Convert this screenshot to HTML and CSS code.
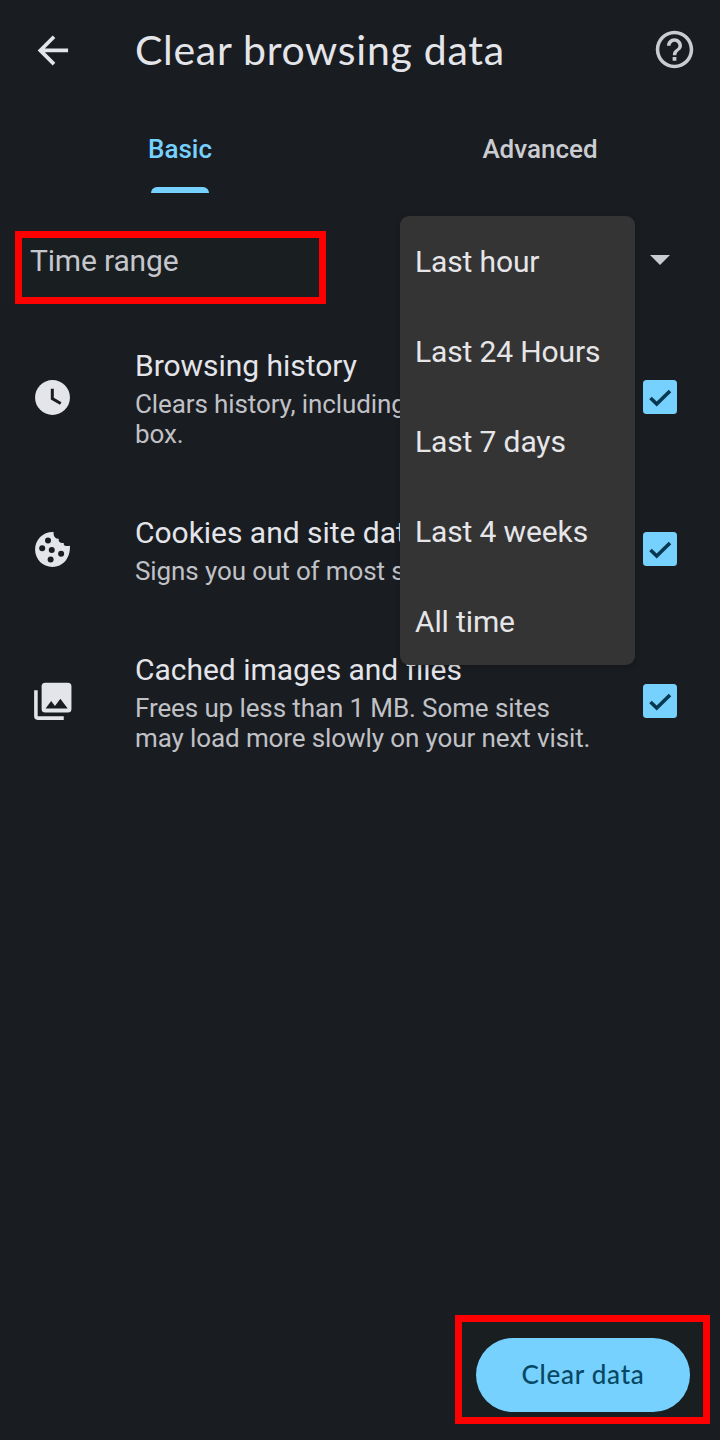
FILE: index.html
```html
<!DOCTYPE html>
<html lang="en">
<head>
<meta charset="utf-8">
<title>Clear browsing data</title>
<link rel="stylesheet" href="styles.css">
</head>
<body>
<div class="screen">
  <header class="bar">
    <svg class="icon" viewBox="0 0 24 24" fill="none" stroke="#e4e5ea" stroke-width="2"><path d="M20.300 12.500H5.600M12.800 5.200l-7.300 7.300 7.300 7.300"/></svg>
    <h1 class="title">Clear browsing data</h1>
    <svg class="icon help" viewBox="0 0 24 24" fill="#cbccd1"><path d="M11 18h2v-2h-2v2zm1-16C6.480 2 2 6.480 2 12s4.480 10 10 10 10-4.480 10-10S17.520 2 12 2zm0 18.100c-4.460 0-8.100-3.640-8.100-8.100S7.540 3.900 12 3.900s8.100 3.640 8.100 8.100-3.640 8.100-8.100 8.100zM12 6c-2.210 0-4 1.790-4 4h1.900c0-1.200.95-2.150 2.100-2.150s2.100.95 2.100 2.150c0 2-3 1.750-3 5h1.900c0-2.250 3-2.500 3-5 0-2.210-1.790-4-4-4z"/></svg>
  </header>
  <nav class="tabs">
    <div class="tab active"><span>Basic</span><i class="indicator"></i></div>
    <div class="tab"><span>Advanced</span></div>
  </nav>
  <section class="range">
    <div class="label-frame"><span class="range-label">Time range</span></div>
    <svg class="caret" viewBox="0 0 20 10"><path d="M0 0h20L10 10z" fill="#cbccd1"/></svg>
    <ul class="menu">
      <li><span>Last hour</span></li>
      <li><span>Last 24 Hours</span></li>
      <li><span>Last 7 days</span></li>
      <li><span>Last 4 weeks</span></li>
      <li><span>All time</span></li>
    </ul>
  </section>
  <main class="list">
    <div class="row">
      <svg class="icon" viewBox="0 0 24 24"><circle cx="12" cy="12" r="9.300" fill="#e4e5ea"/><path d="M11.900 7.300v5.300l4.500 2.600" fill="none" stroke="#191c20" stroke-width="1.600"/></svg>
      <div class="copy"><h2>Browsing history</h2><p>Clears history, including in the search<br>box.</p></div>
      <svg class="check" viewBox="0 0 34 34"><rect width="34" height="34" rx="3.500" fill="#76d1ff"/><path d="M7.500 18l6.200 6L27 11" fill="none" stroke="#08374f" stroke-width="3.600"/></svg>
    </div>
    <div class="row">
      <svg class="icon" viewBox="0 0 24 24"><path d="M12.600 2.700C7 2.500 2.700 6.700 2.700 12c0 5.200 4.100 9.300 9.300 9.300 5.400 0 9.600-4.500 9.300-11.300-.9.200-2 .3-2.800-.1-.4-.3-.6-.7-.5-1.400-1 .1-1.900-.1-2.400-.7-.3-.5-.4-1-.2-1.600-.8.100-1.500-.1-2-.6-.6-.6-1-1.600-.8-2.900z" fill="#e4e5ea"/><g fill="#191c20"><circle cx="9.600" cy="7.200" r="1.600"/><circle cx="6.500" cy="11.300" r="1.600"/><circle cx="11.600" cy="12.300" r="1.600"/><circle cx="16.600" cy="14.200" r="1.600"/><circle cx="11" cy="17.300" r="1.600"/></g></svg>
      <div class="copy"><h2>Cookies and site data</h2><p>Signs you out of most sites.</p></div>
      <svg class="check" viewBox="0 0 34 34"><rect width="34" height="34" rx="3.500" fill="#76d1ff"/><path d="M7.500 18l6.200 6L27 11" fill="none" stroke="#08374f" stroke-width="3.600"/></svg>
    </div>
    <div class="row">
      <svg class="icon" viewBox="0 0 24 24"><path d="M2.200 6h1.900v13.900H18v1.900H4.100a1.900 1.900 0 0 1-1.900-1.900z" fill="#e4e5ea"/><rect x="6.200" y="2" width="15.900" height="15.900" rx="1.900" fill="#e4e5ea"/><path d="M8.300 15.700l3-4 2 2.700 2.900-3.900 3.900 5.200z" fill="#191c20"/></svg>
      <div class="copy"><h2>Cached images and files</h2><p>Frees up less than 1 MB. Some sites<br>may load more slowly on your next visit.</p></div>
      <svg class="check" viewBox="0 0 34 34"><rect width="34" height="34" rx="3.500" fill="#76d1ff"/><path d="M7.500 18l6.200 6L27 11" fill="none" stroke="#08374f" stroke-width="3.600"/></svg>
    </div>
  </main>
  <footer class="footer">
    <div class="button-frame"><button class="clear"><span>Clear data</span></button></div>
  </footer>
</div>
</body>
</html>
```
FILE: styles.css
```css
* { box-sizing: border-box; }
body { margin: 0; background: #191c20; font-family: Roboto, "Liberation Sans", sans-serif; }
.screen { width: 720px; height: 1440px; display: flex; flex-direction: column; overflow: hidden; }
.icon { width: 45px; height: 45px; flex: none; display: block; }
.bar { height: 100px; display: flex; align-items: center; padding: 0 23px 1px 30px; }
.title { margin: 0 0 0 60px; flex: 1; font: 400 41px/50px Lato, sans-serif; letter-spacing: 0.72px; color: #e4e5ea; white-space: nowrap; }
.tabs { height: 93px; display: flex; }
.tab { flex: 1; display: flex; flex-direction: column; align-items: center; justify-content: space-between; padding-top: 34px; font-size: 26px; line-height: 30px; font-weight: 500; color: #cbccd1; }
.active { color: #76d1ff; }
.indicator { width: 58px; height: 6px; background: #76d1ff; border-radius: 6px 6px 0 0; }
.range { position: relative; height: 128px; padding: 38px 50px 0 15px; display: flex; justify-content: space-between; }
.label-frame { width: 311px; height: 73px; border: 7px solid #ff0000; padding: 5px 8px; background: #191e21; }
.range-label { font-size: 30px; line-height: 36px; letter-spacing: -0.17px; color: #c6c7cc; }
.caret { width: 20px; height: 10px; margin-top: 24px; }
.menu { position: absolute; z-index: 2; left: 400px; top: 23px; width: 235px; height: 449px; margin: 0; padding: 0 0 0 15px; list-style: none; background: #343435; border-radius: 9px; box-shadow: 0 2px 6px #0003; }
.menu li { height: 90px; display: flex; align-items: center; font-size: 30px; letter-spacing: -0.13px; color: #e6e6e8; white-space: nowrap; }
.list { flex: 1; }
.row { height: 152px; display: flex; align-items: center; padding: 0 43px 0 30px; }
.copy { flex: 1; margin-left: 60px; padding-top: 2px; white-space: nowrap; }
.copy h2 { margin: 0 0 5px; font-size: 30px; line-height: 36px; font-weight: 400; letter-spacing: -0.03px; color: #e4e5ea; }
.copy p { margin: 0; font-size: 26px; line-height: 30px; letter-spacing: -0.11px; color: #c0c1c6; }
.check { width: 34px; height: 34px; flex: none; }
.footer { display: flex; justify-content: flex-end; padding: 0 10px 16px 0; }
.button-frame { width: 255px; height: 109px; border: 7px solid #ff0000; padding: 16px 13px 0 14px; background: #191e21; }
.clear { width: 100%; height: 74px; border: 0; border-radius: 37px; padding: 0 0 2px; background: #76d1ff; color: #064865; font: 500 26px/30px Lato, sans-serif; letter-spacing: 0.75px; }
```
